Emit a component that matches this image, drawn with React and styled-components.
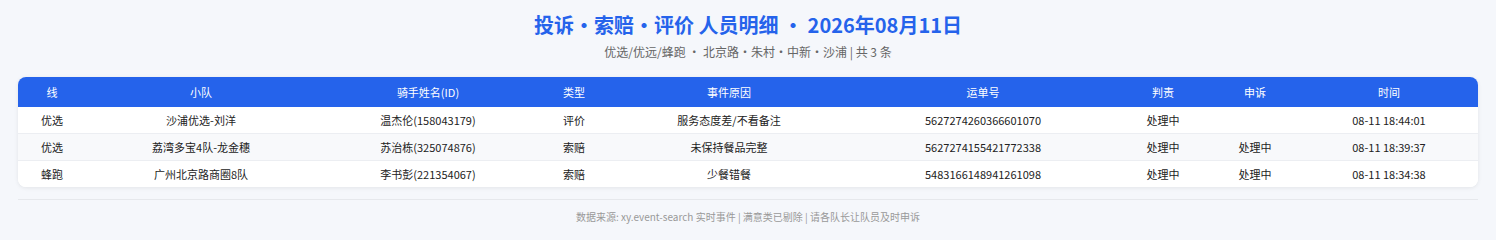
import React from 'react'
import styled, { createGlobalStyle } from 'styled-components'

const GlobalStyle = createGlobalStyle`
  body {
    margin: 0;
    background: #f5f7fb;
    font-family: "Noto Sans CJK SC", "Noto Sans", sans-serif;
    color: #222;
  }
`

const Page = styled.div`
  padding: 11px 18px 0;
`

const Title = styled.h1`
  margin: 0;
  font-size: 20px;
  line-height: 28px;
  font-weight: 700;
  color: #2563eb;
  text-align: center;
`

const Subtitle = styled.p`
  margin: 4px 0 0;
  font-size: 12px;
  line-height: 18px;
  color: #666;
  text-align: center;
`

const Card = styled.div`
  margin-top: 16px;
  background: #fff;
  border-radius: 8px;
  overflow: hidden;
  box-shadow: 0 1px 4px rgba(0, 0, 0, 0.08);
`

const Table = styled.table`
  width: 100%;
  border-collapse: collapse;
  table-layout: fixed;
  font-size: 11px;
`

const HeadCell = styled.th`
  height: 30px;
  padding: 0;
  background: #2563eb;
  color: #fff;
  font-weight: 400;
  text-align: center;
`

const Row = styled.tr`
  background: ${(p) => (p.striped ? '#f8f9fb' : '#fff')};
  border-top: ${(p) => (p.first ? 'none' : '1px solid #eceef2')};
`

const Cell = styled.td`
  height: 26px;
  padding: 0;
  text-align: center;
  white-space: nowrap;
`

const Footer = styled.div`
  margin-top: 12px;
  border-top: 1px solid #e6e8ec;
  padding-top: 10px;
  font-size: 10px;
  line-height: 14px;
  color: #999;
  text-align: center;
`

const columns = [
  ['线', 68],
  ['小队', 230],
  ['骑手姓名(ID)', 224],
  ['类型', 68],
  ['事件原因', 242],
  ['运单号', 266],
  ['判责', 94],
  ['申诉', 90],
  ['时间', 178],
]

const rows = [
  ['优选', '沙浦优选-刘洋', '温杰伦(158043179)', '评价', '服务态度差/不看备注', '5627274260366601070', '处理中', '', '08-11 18:44:01'],
  ['优选', '荔湾多宝4队-龙金穗', '苏治栋(325074876)', '索赔', '未保持餐品完整', '5627274155421772338', '处理中', '处理中', '08-11 18:39:37'],
  ['蜂跑', '广州北京路商圈8队', '李书彭(221354067)', '索赔', '少餐错餐', '5483166148941261098', '处理中', '处理中', '08-11 18:34:38'],
]

const App = () => {
  return (
    <Page>
      <GlobalStyle />
      <Title>投诉·索赔·评价 人员明细 · 2026年08月11日</Title>
      <Subtitle>优选/优远/蜂跑 · 北京路·朱村·中新·沙浦 | 共 3 条</Subtitle>
      <Card>
        <Table>
          <colgroup>
            {columns.map(([name, w]) => (
              <col key={name} width={w} />
            ))}
          </colgroup>
          <thead>
            <tr>
              {columns.map(([name]) => (
                <HeadCell key={name}>{name}</HeadCell>
              ))}
            </tr>
          </thead>
          <tbody>
            {rows.map((row, i) => (
              <Row key={i} first={i === 0} striped={i % 2 === 1}>
                {row.map((v, j) => (
                  <Cell key={j}>{v}</Cell>
                ))}
              </Row>
            ))}
          </tbody>
        </Table>
      </Card>
      <Footer>数据来源: xy.event-search 实时事件 | 满意类已剔除 | 请各队长让队员及时申诉</Footer>
    </Page>
  )
}

export default App
